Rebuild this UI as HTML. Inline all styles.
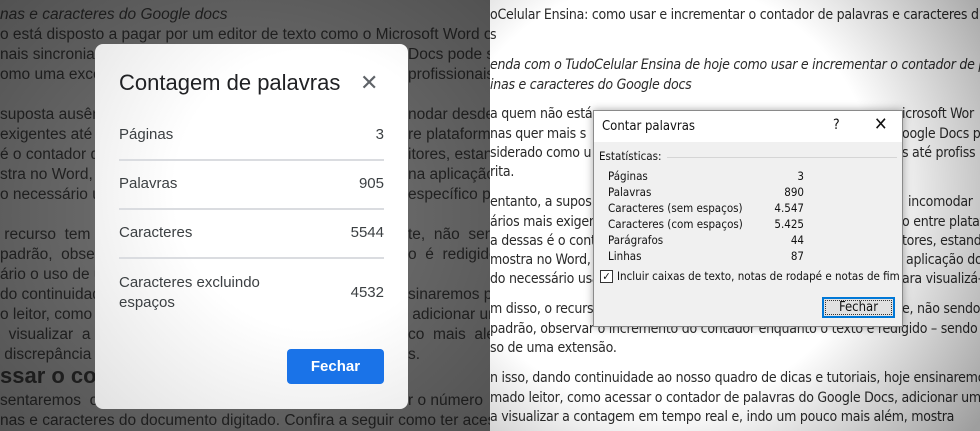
<!DOCTYPE html>
<html><head><meta charset="utf-8"><style>
*{margin:0;padding:0;box-sizing:border-box}
body{width:980px;height:431px;overflow:hidden;position:relative;font-family:"Liberation Sans",Arial,sans-serif}
#L{position:absolute;left:0;top:0;width:490px;height:431px;overflow:hidden;background:#696969}
#L .vg{position:absolute;inset:0;background:radial-gradient(ellipse at 50% 50%,rgba(0,0,0,0) 40%,rgba(0,0,0,.22) 100%)}
#L .t{position:absolute;font-size:15.5px;line-height:18px;color:#222;white-space:nowrap}
#R{position:absolute;left:490px;top:0;width:490px;height:431px;overflow:hidden;background:#fff}
#R .t{position:absolute;font-size:14px;line-height:18px;color:#2a2a2a;white-space:nowrap;font-family:"DejaVu Sans Condensed","DejaVu Sans",sans-serif;letter-spacing:-0.25px}
#R .vg{position:absolute;inset:0;background:radial-gradient(ellipse 80% 90% at 35% 45%,rgba(0,0,0,0) 55%,rgba(0,0,0,.38) 100%)}
.gd{position:absolute;left:95px;top:44px;width:313px;height:365px;background:radial-gradient(ellipse at 70% 40%,#fff 45%,#e2e2e2 100%);border-radius:8px;color:#3c4043}
.gd .ttl{position:absolute;left:24px;top:26px;font-size:22px;color:#202124}
.gd .x{position:absolute;left:265px;top:26px;font-size:22px;color:#5f6368}
.gd .r{position:absolute;left:24px;width:265px;font-size:15px;color:#3c4043}
.gd .r span{position:absolute;right:0}
.gd .ln{position:absolute;left:24px;width:265px;height:2px;background:#dadce0}
.gd .btn{position:absolute;left:192px;top:305px;width:97px;height:35px;background:#1a73e8;border-radius:4px;color:#fff;font-weight:bold;font-size:15px;text-align:center;line-height:35px}
.wd{position:absolute;left:103px;top:110px;width:310px;height:217px;background:#f0f0f0;border:1px solid #8a8a8a;box-shadow:0 0 8px rgba(0,0,0,.35);font-family:"DejaVu Sans Condensed","DejaVu Sans",sans-serif;font-size:11.5px;color:#111}
.wd .tb{position:absolute;left:0;top:0;width:100%;height:31px;background:#fff}
.wd .a{position:absolute;white-space:nowrap}
</style></head><body>
<div id="L">
<div class="t" style="top:6px;font-style:italic">nas e caracteres do Google docs</div>
<div class="t" style="top:26px">o está disposto a pagar por um editor de texto como o Microsoft Word ou qu</div>
<div class="t" style="top:46px">nais sincronia</div><div class="t" style="top:46px;left:408px">Docs pode s</div>
<div class="t" style="top:66px">omo uma excel</div><div class="t" style="top:66px;left:408px">profissionais e</div>
<div class="t" style="top:106px">suposta ausên</div><div class="t" style="top:106px;left:408px">nodar desde</div>
<div class="t" style="top:126px">exigentes até a</div><div class="t" style="top:126px;left:408px">re plataforma</div>
<div class="t" style="top:146px">é o contador d</div><div class="t" style="top:146px;left:408px">itores, estand</div>
<div class="t" style="top:166px">stra no Word, c</div><div class="t" style="top:166px;left:408px">na aplicação</div>
<div class="t" style="top:186px">o necessário u</div><div class="t" style="top:186px;left:408px">específico pa</div>
<div class="t" style="top:226px">&nbsp;recurso&nbsp; tem</div><div class="t" style="top:226px;left:408px">te,&nbsp; não&nbsp; sen</div>
<div class="t" style="top:246px">padrão,&nbsp; observ</div><div class="t" style="top:246px;left:408px">o&nbsp; é&nbsp; redigido</div>
<div class="t" style="top:266px">ário o uso de un</div>
<div class="t" style="top:286px">do continuidad</div><div class="t" style="top:286px;left:408px">sinaremos pa</div>
<div class="t" style="top:306px">o leitor, como a</div><div class="t" style="top:306px;left:408px">&nbsp;adicionar un</div>
<div class="t" style="top:326px">&nbsp; visualizar&nbsp; a</div><div class="t" style="top:326px;left:408px">co&nbsp; mais&nbsp; alé</div>
<div class="t" style="top:346px">&nbsp;discrepância e</div><div class="t" style="top:346px;left:408px">s.</div>
<div class="t" style="top:363px;font-size:22px;font-weight:bold;line-height:26px">ssar o conta</div>
<div class="t" style="top:392px">sentaremos&nbsp; o&nbsp; c</div><div class="t" style="top:392px;left:408px">r o número</div>
<div class="t" style="top:412px">nas e caracteres do documento digitado. Confira a seguir como ter acesso</div>
<div class="vg"></div>
<div class="gd">
<div class="ttl">Contagem de palavras</div>
<div class="x">✕</div>
<div class="r" style="top:82px">Páginas<span>3</span></div>
<div class="ln" style="top:115px"></div>
<div class="r" style="top:131px">Palavras<span>905</span></div>
<div class="ln" style="top:164px"></div>
<div class="r" style="top:180px">Caracteres<span>5544</span></div>
<div class="ln" style="top:213px"></div>
<div class="r" style="top:229px;line-height:20px">Caracteres excluindo<br>espaços<span style="top:10px">4532</span></div>
<div class="btn">Fechar</div>
</div>
</div>
<div id="R">
<div class="t" style="top:6px">oCelular Ensina: como usar e incrementar o contador de palavras e caracteres d</div>
<div class="t" style="top:26px">s</div>
<div class="t" style="top:56px;font-style:italic">enda com o TudoCelular Ensina de hoje como usar e incrementar o contador de p</div>
<div class="t" style="top:76px;font-style:italic">inas e caracteres do Google docs</div>
<div class="t" style="top:105px">a quem não está</div><div class="t" style="top:105px;left:412px">icrosoft Wor</div>
<div class="t" style="top:125px">nas quer mais s</div><div class="t" style="top:125px;left:412px">oogle Docs p</div>
<div class="t" style="top:144px">siderado como u</div><div class="t" style="top:144px;left:412px">s até profiss</div>
<div class="t" style="top:163px">rita.</div>
<div class="t" style="top:193px">entanto, a supos</div><div class="t" style="top:193px;left:418px">incomodar</div>
<div class="t" style="top:213px">ários mais exigen</div><div class="t" style="top:213px;left:412px">o entre plataf</div>
<div class="t" style="top:232px">a dessas é o conta</div><div class="t" style="top:232px;left:412px">tores, estando</div>
<div class="t" style="top:251px">mostra no Word,</div><div class="t" style="top:251px;left:416px">aplicação do</div>
<div class="t" style="top:270px">do necessário usa</div><div class="t" style="top:270px;left:412px">ara visualizá-l</div>
<div class="t" style="top:300px">m disso, o recurso</div><div class="t" style="top:300px;left:412px">e, não sendo</div>
<div class="t" style="top:320px">padrão, observar o incremento do contador enquanto o texto é redigido – sendo n</div>
<div class="t" style="top:339px">so de uma extensão.</div>
<div class="t" style="top:369px">n isso, dando continuidade ao nosso quadro de dicas e tutoriais, hoje ensinaremos p</div>
<div class="t" style="top:389px">mado leitor, como acessar o contador de palavras do Google Docs, adicionar uma</div>
<div class="t" style="top:408px">a visualizar a contagem em tempo real e, indo um pouco mais além, mostra</div>
<div class="vg"></div>
<div class="wd">
<div class="tb"></div>
<div class="a" style="left:8px;top:8px;font-size:13px">Contar palavras</div>
<div class="a" style="left:239px;top:6px;font-size:14px">?</div>
<div class="a" style="left:280px;top:3px;font-size:18px;font-weight:300">✕</div>
<div class="a" style="left:5px;top:38px">Estatísticas:</div>
<div style="position:absolute;left:73px;top:46px;width:230px;height:1px;background:#d5d5d5"></div>
<div class="a" style="left:14px;top:57px;line-height:16px">Páginas<br>Palavras<br>Caracteres (sem espaços)<br>Caracteres (com espaços)<br>Parágrafos<br>Linhas</div>
<div class="a" style="left:150px;top:57px;width:60px;text-align:right;line-height:16px">3<br>890<br>4.547<br>5.425<br>44<br>87</div>
<div style="position:absolute;left:6px;top:159px;width:13px;height:13px;border:1px solid #333;background:#fff;font-size:11px;line-height:11px;text-align:center">✓</div>
<div class="a" style="left:23px;top:158px">Incluir caixas de texto, notas de rodapé e notas de fim</div>
<div style="position:absolute;left:228px;top:186px;width:73px;height:21px;border:2px solid #0078d7;background:#e1e1e1;text-align:center;line-height:17px;font-size:13px"><div style="position:absolute;inset:1px;border:1px dotted #333"></div>Fechar</div>
</div>
</div>
</body></html>
